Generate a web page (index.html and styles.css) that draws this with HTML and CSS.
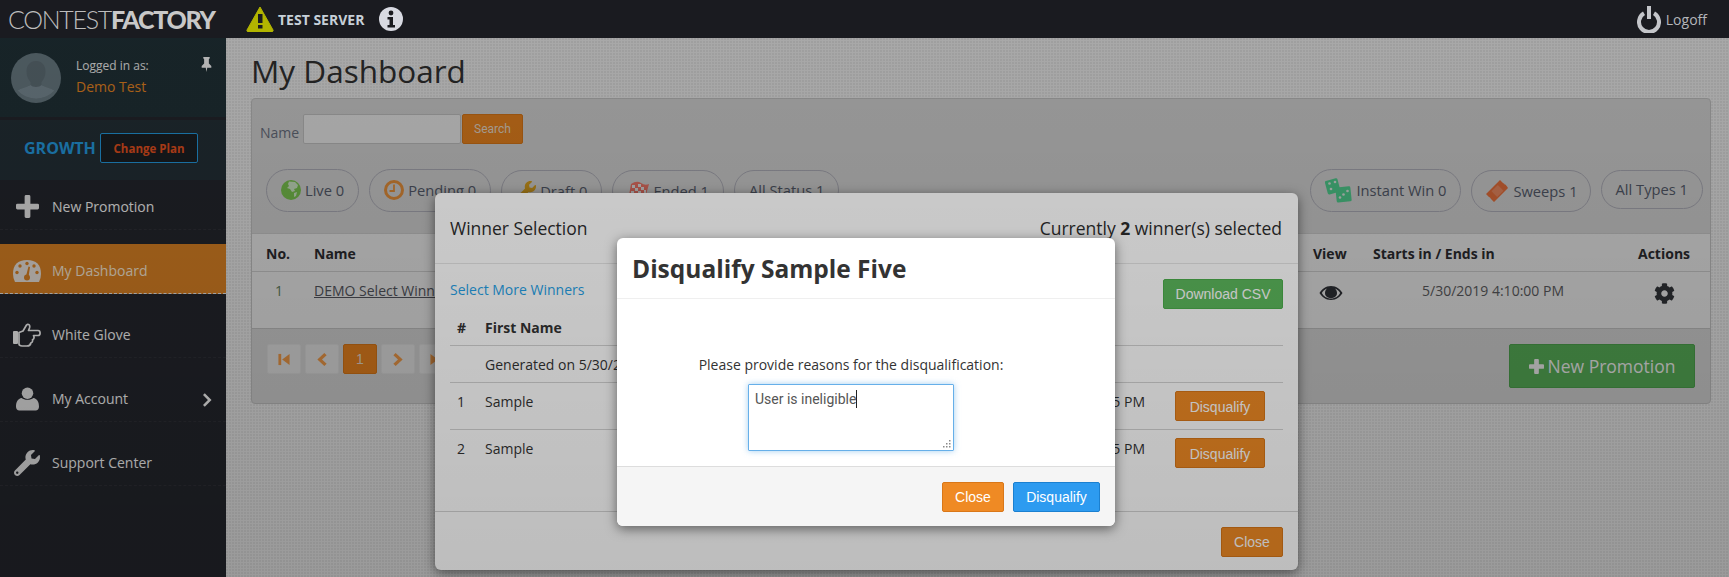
FILE: index.html
```html
<!DOCTYPE html>
<html lang="en">
<head>
<meta charset="utf-8">
<title>Contest Factory - My Dashboard</title>
<link rel="stylesheet" href="styles.css">
</head>
<body>
<div class="app">
  <header class="topbar">
    <div class="logo"><span class="logo-thin">CONTEST</span><span class="logo-bold">FACTORY</span></div>
    <svg class="ic-warn" viewBox="0 0 28 26"><path d="M14 1 L27 24 Q27.500 25.500 26 25.500 H2 Q.5 25.500 1 24 Z" fill="#b2b400" stroke="#b2b400" stroke-linejoin="round"/><rect x="12" y="8" width="4.500" height="9" fill="#1a1b20"/><rect x="12" y="19" width="4.500" height="3.500" fill="#1a1b20"/></svg>
    <span class="test-server">TEST SERVER</span>
    <svg class="ic-info" viewBox="0 0 24 24"><circle cx="12" cy="12" r="12" fill="#d8dae2"/><circle cx="12" cy="6" r="2.400" fill="#1a1b20"/><path d="M8.500 10h5.500v8h2v2.500H8.500V18h2v-5.500h-2z" fill="#1a1b20"/></svg>
    <div class="logoff">
      <svg class="ic-power" viewBox="0 0 24 27"><path d="M7 7.300 A10 10 0 1 0 17 7.300" fill="none" stroke="#c4c6ca" stroke-width="4"/><rect x="10" y="0" width="4" height="13" fill="#c4c6ca"/></svg>
      <span>Logoff</span>
    </div>
  </header>

  <div class="layout">
    <aside class="sidebar">
      <section class="user-panel">
        <svg class="avatar" viewBox="0 0 50 50"><circle cx="25" cy="25" r="25" fill="#6b7d85"/><path d="M25 8c6 0 9.500 4.500 9.500 10.500 0 4-1.500 8-4 10.500v3c3 2 9 3 13 5.500A25 25 0 0 1 6.500 37.500c4-2.500 10-3.500 13-5.500v-3c-2.500-2.500-4-6.500-4-10.500C15.500 12.500 19 8 25 8z" fill="#617079"/><path d="M6.500 37.500c4-2.500 10-3.500 13-5.500 2 2.500 9 2.500 11 0 3 2 9 3 13 5.500A25 25 0 0 1 6.500 37.500z" fill="#7c8e97"/></svg>
        <div class="user-text">
          <div class="logged">Logged in as:</div>
          <div class="user-name">Demo Test</div>
        </div>
        <svg class="ic-pin" viewBox="0 0 10 14"><path d="M2 0h6v1.200L7.200 2v4L9.500 8.500V10H5.700L5 14 4.300 10H.5V8.500L2.800 6V2L2 1.200z" fill="#fff"/></svg>
      </section>
      <section class="plan-panel">
        <span class="plan-name">GROWTH</span>
        <span class="plan-btn">Change Plan</span>
      </section>
      <nav class="nav">
        <a class="nav-item"><span class="nav-ic"><svg class="ic-plus" viewBox="0 0 24 24"><path d="M9 1.500Q9 0 10.500 0h3Q15 0 15 1.500V9h7.500Q24 9 24 10.500v3q0 1.500-1.500 1.500H15v7.500q0 1.500-1.500 1.500h-3Q9 24 9 22.500V15H1.500Q0 15 0 13.500v-3Q0 9 1.500 9H9z"/></svg></span>New Promotion</a>
        <a class="nav-item active"><span class="nav-ic"><svg class="ic-gauge" viewBox="0 0 28 22"><path d="M2 22Q0 18 0 14 0 0 14 0t14 14q0 4-2 8z" fill="#efe9e2"/><g fill="#df8525"><circle cx="14" cy="3.500" r="1.700"/><circle cx="7" cy="6" r="1.700"/><circle cx="21" cy="6" r="1.700"/><circle cx="4" cy="12.500" r="1.700"/><circle cx="24" cy="12.500" r="1.700"/><circle cx="14" cy="17.500" r="3"/><path d="M13 16 L15.500 6.500 L17 7 L15.500 17z"/></g></svg></span>My Dashboard</a>
        <a class="nav-item"><span class="nav-ic"><svg class="ic-hand" viewBox="0 0 28 24"><rect x="0" y="8" width="5" height="13" rx="1" fill="#fff"/><path d="M6 9.500 L10 8 L13.500 2 C15 .5 17.500 1.500 16.500 5 L15.500 7.500 H25 C27.800 7.500 27.800 12.500 25 12.500 H20.500 C21.500 14.500 21 16 19.500 16.800 C20 18.500 19 19.500 17.800 20 C17.500 22 16 23 14 23 H9 C7 23 6 22 6 21 Z" fill="none" stroke="#fff" stroke-width="1.700" stroke-linejoin="round"/></svg></span>White Glove</a>
        <a class="nav-item"><span class="nav-ic"><svg class="ic-user" viewBox="0 0 24 24"><circle cx="12" cy="6" r="6"/><path d="M6 11c2 2.500 10 2.500 12 0 4 .5 6 4 6 9 0 2.500-1.500 4-3.500 4h-17C1.500 24 0 22.500 0 20c0-5 2-8.500 6-9z"/></svg></span>My Account<svg class="ic-chev" viewBox="0 0 10 15"><path d="M2 0 L9.500 7.500 L2 15 L0 13 L5.500 7.500 L0 2z"/></svg></a>
        <a class="nav-item"><span class="nav-ic"><svg class="ic-wrench" viewBox="0 0 512 512"><path d="M507.730 109.100c-2.240-9.030-13.540-12.090-20.120-5.510l-74.360 74.360-67.880-11.310-11.310-67.880 74.360-74.360c6.620-6.620 3.430-17.900-5.660-20.160-47.380-11.740-99.550.91-136.580 37.930-39.640 39.640-50.550 97.100-34.050 147.200L18.740 402.760c-24.990 24.990-24.990 65.510 0 90.500 24.990 24.990 65.510 24.990 90.500 0l213.210-213.210c50.120 16.710 107.470 5.680 147.370-34.220 37.070-37.070 49.700-89.320 37.910-136.730zM64 472c-13.250 0-24-10.750-24-24 0-13.260 10.750-24 24-24s24 10.740 24 24c0 13.250-10.750 24-24 24z"/></svg></span>Support Center</a>
      </nav>
    </aside>

    <main class="content">
      <h1 class="page-title">My Dashboard</h1>
      <section class="panel">
        <form class="search-row">
          <span class="search-label">Name</span>
          <span class="search-input"></span>
          <span class="btn btn-search">Search</span>
        </form>
        <div class="pill-row">
          <div class="pill-group">
            <span class="pill"><svg class="pill-ic" viewBox="0 0 20 20"><circle cx="10" cy="10" r="10" fill="#7cc650"/><path d="M8 1.500l6 .5 3 3-1 3-3 1 1 2-3 1-2-3-3-1 2-2-1-2zM13 13l3-1-1 4-2 1z" fill="#cfe8c6"/></svg>Live 0</span>
            <span class="pill"><svg class="pill-ic" viewBox="0 0 20 20"><circle cx="10" cy="10" r="8.500" fill="none" stroke="#e8923c" stroke-width="3"/><path d="M10 4.500V11H5.500" fill="none" stroke="#e8923c" stroke-width="1.800"/></svg>Pending 0</span>
            <span class="pill pill-low"><svg class="pill-ic" viewBox="0 0 512 512"><path fill="#d8a020" d="M507.730 109.100c-2.240-9.030-13.540-12.090-20.120-5.510l-74.360 74.360-67.880-11.310-11.310-67.880 74.360-74.360c6.620-6.620 3.430-17.900-5.660-20.160-47.380-11.740-99.550.91-136.580 37.930-39.640 39.640-50.550 97.100-34.050 147.200L18.740 402.760c-24.990 24.990-24.990 65.510 0 90.500 24.990 24.990 65.510 24.990 90.500 0l213.210-213.210c50.120 16.710 107.470 5.680 147.370-34.220 37.070-37.070 49.700-89.320 37.910-136.730z"/></svg>Draft 0</span>
            <span class="pill pill-low"><svg class="pill-ic ic-flag" viewBox="0 0 22 20"><path d="M1 20 L4 3 Q10 -1 14 2 T22 3 L19 14 Q14 16 10 13 T2 16" fill="#f0776a"/><path d="M5 4h3v3H5zM11 3h3v3h-3zM8 7h3v3H8zM14 6h3v3h-3zM4 10h3v3H4zM11 10h3v3h-3zM17 9h2v3h-2z" fill="#e8e8e8"/></svg>Ended 1</span>
            <span class="pill pill-low pill-plain">All Status 1</span>
          </div>
          <div class="pill-group">
            <span class="pill"><svg class="pill-ic ic-dice" viewBox="0 0 27 25"><rect x="1" y="1.500" width="13" height="14" rx="1.500" fill="#52d090" transform="rotate(-15 7 8)"/><rect x="11" y="9" width="15" height="15" rx="1.500" fill="#52d090" transform="rotate(-6 18 16)"/><g fill="#dfe8e2"><circle cx="4.500" cy="5.500" r="1.300"/><circle cx="10" cy="4" r="1.300"/><circle cx="6" cy="11" r="1.300"/><circle cx="15" cy="19.500" r="1.300"/><circle cx="18.500" cy="16.500" r="1.300"/><circle cx="22.500" cy="13" r="1.300"/></g></svg>Instant Win 0</span>
            <span class="pill pill-low pill-sweeps"><svg class="pill-ic ic-ticket" viewBox="0 0 24 24"><path d="M15 1 L18 4 Q20 5 20 6 Q20 4 23 9 L9 23 L6 20 Q5 18 4 18 L1 15 Z" fill="#e8703c"/><rect x="8" y="8" width="9" height="8" transform="rotate(-45 12.500 12)" fill="#f0a080" opacity=".55"/></svg>Sweeps 1</span>
            <span class="pill pill-low pill-plain pill-short">All Types 1</span>
          </div>
        </div>
        <div class="table-wrap">
          <div class="grid-row grid-head">
            <span>No.</span><span>Name</span><span>View</span><span>Starts in / Ends in</span><span>Actions</span>
          </div>
          <div class="grid-row grid-body">
            <span class="cell-no">1</span>
            <a class="cell-name">DEMO Select Winners Sample</a>
            <svg class="ic-eye" viewBox="0 0 24 16"><path d="M12 1C6.500 1 2.500 4.500 .5 8c2 3.500 6 7 11.500 7s9.500-3.500 11.500-7C21.500 4.500 17.500 1 12 1zm0 12.500C7.500 13.500 4.500 11 2.800 8 4 6 6 4.200 8 3.500 6.800 4.700 6 6.200 6 8c0 3.300 2.700 5 6 5s6-1.700 6-5c0-1.800-.8-3.300-2-4.500 2 .7 4 2.500 5.200 4.500-1.700 3-4.700 5.500-9.200 5.500z" fill="#2e3036"/></svg>
            <span class="cell-date">5/30/2019 4:10:00 PM</span>
            <svg class="ic-gear" viewBox="0 0 512 512"><path fill="#33353a" d="M487.400 315.700l-42.600-24.600c4.300-23.200 4.300-47 0-70.200l42.600-24.600c4.900-2.800 7.100-8.600 5.500-14-11.100-35.600-30-67.800-54.700-94.600-3.800-4.100-10-5.100-14.800-2.300L380.800 110c-17.900-15.400-38.500-27.300-60.800-35.100V25.800c0-5.600-3.900-10.500-9.400-11.700-36.700-8.200-74.300-7.800-109.200 0-5.500 1.200-9.400 6.100-9.400 11.700V75c-22.200 7.900-42.800 19.800-60.800 35.100L88.700 85.500c-4.900-2.800-11-1.900-14.800 2.300-24.700 26.700-43.600 58.900-54.700 94.600-1.700 5.400.6 11.200 5.500 14L67.300 221c-4.300 23.200-4.300 47 0 70.200l-42.600 24.600c-4.900 2.800-7.100 8.600-5.500 14 11.100 35.600 30 67.800 54.700 94.600 3.800 4.100 10 5.100 14.800 2.300l42.600-24.600c17.900 15.400 38.500 27.300 60.800 35.100v49.200c0 5.600 3.900 10.500 9.400 11.700 36.700 8.200 74.300 7.800 109.200 0 5.500-1.200 9.400-6.100 9.400-11.700v-49.200c22.200-7.900 42.800-19.800 60.800-35.100l42.600 24.600c4.900 2.800 11 1.900 14.800-2.300 24.700-26.700 43.600-58.900 54.700-94.600 1.500-5.500-.7-11.300-5.600-14.100zM256 336c-44.100 0-80-35.900-80-80s35.900-80 80-80 80 35.900 80 80-35.900 80-80 80z"/></svg>
          </div>
        </div>
        <div class="pager-row">
          <div class="pager">
            <span class="page-btn"><svg viewBox="0 0 12 14"><rect x="0" y="1" width="3" height="12"/><path d="M12 1v12L4 7z"/></svg></span>
            <span class="page-btn"><svg viewBox="0 0 10 14"><path d="M7.500 0L0 7l7.500 7L10 11.500 5 7l5-4.500z"/></svg></span>
            <span class="page-btn page-current">1</span>
            <span class="page-btn"><svg viewBox="0 0 10 14"><path d="M2.500 0L10 7l-7.500 7L0 11.500 5 7 0 2.500z"/></svg></span>
            <span class="page-btn"><svg viewBox="0 0 12 14"><rect x="9" y="1" width="3" height="12"/><path d="M0 1v12l8-6z"/></svg></span>
          </div>
          <span class="btn-new"><svg viewBox="0 0 16 16"><path d="M5.500 1q0-1 1-1h3q1 0 1 1v4.500H15q1 0 1 1v3q0 1-1 1h-4.500V15q0 1-1 1h-3q-1 0-1-1v-4.500H1q-1 0-1-1v-3q0-1 1-1h4.500z"/></svg>New Promotion</span>
        </div>
      </section>
    </main>
  </div>

  <div class="backdrop backdrop-first"></div>

  <section class="modal modal-winner">
    <div class="winner-head">
      <span>Winner Selection</span>
      <span>Currently <b>2</b> winner(s) selected</span>
    </div>
    <div class="winner-body">
      <div class="winner-actions">
        <a class="link-more">Select More Winners</a>
        <span class="btn btn-green">Download CSV</span>
      </div>
      <div class="w-row w-head"><span>#</span><span>First Name</span></div>
      <div class="w-row w-gen"><span></span><span>Generated on 5/30/2019</span></div>
      <div class="w-row w-item"><span>1</span><span>Sample</span><span class="w-date">5/30/2019 4:15:25 PM</span><span class="btn btn-orange btn-dq">Disqualify</span></div>
      <div class="w-row w-item w-last"><span>2</span><span>Sample</span><span class="w-date">5/30/2019 4:15:25 PM</span><span class="btn btn-orange btn-dq">Disqualify</span></div>
    </div>
    <div class="winner-foot"><span class="btn btn-orange btn-close">Close</span></div>
  </section>

  <div class="backdrop backdrop-second"></div>

  <section class="modal modal-dq">
    <h2 class="dq-head">Disqualify Sample Five</h2>
    <div class="dq-body">
      <p class="dq-text">Please provide reasons for the disqualification:</p>
      <div class="dq-area"><span class="dq-value">User is ineligible</span><svg class="dq-grip" viewBox="0 0 9 9"><g fill="#8a8a8a"><rect x="7" y="1" width="1.500" height="1.500"/><rect x="4" y="4" width="1.500" height="1.500"/><rect x="7" y="4" width="1.500" height="1.500"/><rect x="1" y="7" width="1.500" height="1.500"/><rect x="4" y="7" width="1.500" height="1.500"/><rect x="7" y="7" width="1.500" height="1.500"/></g></svg></div>
    </div>
    <div class="dq-foot">
      <span class="btn btn-orange btn-close">Close</span>
      <span class="btn btn-blue">Disqualify</span>
    </div>
  </section>
</div>
</body>
</html>
```

FILE: styles.css
```css
* { box-sizing: border-box; }
html, body { margin: 0; padding: 0; }
body { font-family: "Open Sans", "Liberation Sans", sans-serif; font-size: 14px; color: #444; background: #25272e; }
.app { position: relative; width: 1729px; height: 577px; overflow: hidden; }

/* top bar */
.topbar { position: relative; z-index: 5; height: 38px; background: #1a1b20; display: flex; align-items: center; color: #c0c2c6; }
.logo { margin-left: 8px; width: 210px; font-family: Lato, sans-serif; font-size: 25px; letter-spacing: -1.300px; color: #bdbdbd; white-space: nowrap; line-height: 32px; }
.logo-thin { font-weight: 300; }
.logo-bold { font-weight: 900; color: #c8c8c8; }
.ic-warn { width: 28px; height: 26px; margin-left: 28px; }
.test-server { margin-left: 4px; font-weight: 700; font-size: 14px; color: #c6d0d8; white-space: nowrap; }
.ic-info { width: 24px; height: 24px; margin-left: 15px; }
.logoff { margin-left: auto; margin-right: 22px; display: flex; align-items: center; gap: 5px; font-size: 14px; color: #b4b6ba; }
.ic-power { width: 24px; height: 27px; }

/* layout */
.layout { display: flex; height: 539px; }
.sidebar { width: 226px; flex: none; background: #25272e; }
.user-panel { height: 79px; background: #223339; display: flex; padding: 15px 0 0 11px; position: relative; }
.avatar { width: 50px; height: 50px; flex: none; }
.user-text { margin-left: 15px; padding-top: 2px; }
.logged { font-size: 12px; line-height: 21px; color: #f2f2f2; }
.user-name { font-size: 14px; line-height: 21px; color: #ee8a22; }
.ic-pin { position: absolute; left: 201px; top: 19px; width: 11px; height: 15px; }
.plan-panel { margin-top: 3px; height: 60px; background: #253238; display: flex; align-items: center; padding: 0 0 4px 24px; }
.plan-name { font-size: 16px; font-weight: 700; color: #259fe6; width: 76px; }
.plan-btn { width: 98px; height: 30px; border: 1px solid #259fe6; border-radius: 2px; background: #1c2024; color: #ee5420; font-size: 11.500px; font-weight: 700; display: flex; align-items: center; justify-content: center; padding-top: 1px; }

.nav { display: flex; flex-direction: column; gap: 14px; }
.nav-item { height: 50px; padding-top: 4px; display: flex; align-items: center; color: #fff; font-size: 14px; border-bottom: 1px dashed rgba(255,255,255,.05); position: relative; }
.nav-item.active { background: #df8525; color: #fff0dc; border-bottom-color: #eee; }
.nav-ic { width: 28px; height: 26px; margin: 0 11px 0 13px; display: flex; align-items: center; justify-content: center; fill: #eee; }
.ic-plus { width: 23px; height: 23px; }
.ic-gauge { width: 28px; height: 22px; }
.ic-hand { width: 28px; height: 24px; }
.ic-user { width: 23px; height: 24px; }
.ic-wrench { width: 26px; height: 26px; }
.ic-chev { width: 9px; height: 14px; fill: #fff; position: absolute; left: 203px; top: 21px; }

/* main */
.content { flex: 1; min-width: 0; padding: 11px 18px 0 25px; background: radial-gradient(circle at 1px 1px, rgba(0,0,0,.05) .8px, transparent 1px) 0 0 / 3px 3px, #eeeeee; }
.page-title { margin: 0 0 5px; font-size: 31.500px; font-weight: 400; line-height: 44px; color: #323232; }
.panel { height: 306px; background: #d5d5d5; border: 1px solid #c2c2c2; border-radius: 4px; }
.search-row { margin: 0; padding: 15px 0 0 8px; display: flex; align-items: stretch; height: 45px; }
.search-label { width: 43px; padding-top: 9px; color: #6a7080; line-height: 20px; }
.search-input { width: 158px; background: #ececec; border: 1px solid #c2c2c2; border-radius: 2px; }
.btn { display: inline-flex; align-items: center; justify-content: center; font-family: "Liberation Sans", Arial, sans-serif; border-radius: 2px; white-space: nowrap; }
.btn-search { width: 61px; margin-left: 1px; background: #ea841f; border: 1px solid #d97718; color: #e8dccc; font-family: Roboto, sans-serif; font-size: 12px; }

.pill-row { display: flex; justify-content: space-between; padding: 25px 7px 0 14px; }
.pill-group { display: flex; align-items: flex-start; gap: 10px; }
.pill { height: 43px; padding: 0 14px 1px; display: inline-flex; align-items: center; gap: 4px; border: 1px solid #aeaeb8; border-radius: 22px; color: #565c6c; font-size: 14.700px; white-space: nowrap; }
.pill-low { margin-top: 1px; height: 42px; }
.pill-plain { height: 40px; }
.pill-short { height: 39px; }
.pill-sweeps { padding: 0 12px 1px 13px; }
.pill-ic { width: 20px; height: 20px; flex: none; }
.ic-flag { width: 22px; }
.ic-dice { width: 27px; height: 25px; }
.ic-ticket { width: 24px; height: 24px; }

.table-wrap { margin-top: 21px; background: #ededed; border-top: 1px solid #ccc; border-bottom: 1px solid #c2c2c2; }
.grid-row { display: grid; grid-template-columns: 48px 999px 60px 265px 1fr; padding-left: 14px; align-items: center; }
.grid-head { height: 38px; font-weight: 700; color: #2c2c30; border-bottom: 1px solid #ccc; padding-top: 1px; }
.grid-body { height: 56px; align-items: start; padding-top: 9px; color: #5c5c60; }
.cell-no { padding-left: 9px; color: #5f8060; line-height: 20px; }
.cell-name { color: #54565e; text-decoration: underline; line-height: 20px; }
.ic-eye { width: 24px; height: 16px; margin: 4px 0 0 6px; }
.cell-date { padding-left: 49px; line-height: 20px; }
.ic-gear { width: 21px; height: 21px; margin: 2px 0 0 16px; }

.pager-row { display: flex; justify-content: space-between; padding: 15px 15px 0 15px; }
.pager { display: flex; gap: 4px; }
.page-btn { width: 34px; height: 30px; background: #e4e4e4; border: 1px solid #dcdcdc; border-radius: 2px; display: flex; align-items: center; justify-content: center; fill: #ef9a48; font-family: "Liberation Sans", sans-serif; }
.page-btn svg { height: 13px; width: 12px; }
.page-current { background: #ea841f; border-color: #d97718; color: #e8dccc; }
.btn-new { width: 186px; height: 44px; background: #58b058; border: 1px solid #4ea44e; border-radius: 2px; color: #f4f4f4; font-size: 17.500px; display: flex; align-items: center; justify-content: center; gap: 4px; }
.btn-new svg { width: 15px; height: 15px; fill: #f2f2f2; }

/* overlays */
.backdrop { position: absolute; inset: 0; }
.backdrop-first { z-index: 1; background: rgba(0,0,0,.125); }
.backdrop-second { z-index: 3; background: linear-gradient(rgba(0,0,0,.19), rgba(0,0,0,.26)); }
.modal { position: absolute; background: #fff; border-radius: 6px; box-shadow: 0 3px 12px rgba(0,0,0,.5); color: #333; }

.modal-winner { z-index: 2; left: 435px; top: 193px; width: 863px; height: 377px; display: flex; flex-direction: column; }
.winner-head { height: 71px; padding: 0 16px 0 15px; display: flex; justify-content: space-between; align-items: center; font-size: 17.500px; border-bottom: 1px solid #e6e6e6; color: #2c2c2c; }
.winner-body { height: 247px; padding: 15px 15px 0; }
.winner-actions { display: flex; justify-content: space-between; height: 30px; }
.link-more { color: #259fe6; line-height: 22px; }
.btn-green { width: 120px; height: 30px; background: #5cb85c; border: 1px solid #4cae4c; color: #fff; font-size: 14px; }
.w-row { display: grid; grid-template-columns: 35px 480px 180px 138px; align-items: center; border-bottom: 1px solid #d4d4d4; }
.w-row > span:first-child { padding-left: 7px; }
.w-head { height: 37px; font-weight: 700; padding-top: 1px; }
.w-gen { height: 37px; padding-top: 1px; white-space: nowrap; }
.w-item { height: 47px; align-items: start; padding-top: 8px; }
.w-item > span { line-height: 22px; }
.w-item .btn-dq { line-height: 1; padding-top: 1px; }
.w-last { border-bottom: 0; }
.w-date { text-align: right; white-space: nowrap; }
.btn-orange { background: #ef8a24; border: 1px solid #d97718; color: #fff; font-size: 14px; }
.btn-dq { width: 90px; height: 30px; justify-self: start; margin-left: 30px; }
.winner-foot { flex: 1; border-top: 1px solid #d4d4d4; padding: 15px 15px 0; display: flex; justify-content: flex-end; }
.btn-close { width: 62px; height: 30px; }

.modal-dq { z-index: 4; left: 617px; top: 238px; width: 498px; height: 288px; display: flex; flex-direction: column; }
.dq-head { margin: 0; height: 61px; padding: 0 15px; font-size: 24.500px; font-weight: 700; line-height: 61px; color: #333; border-bottom: 1px solid #efefef; }
.dq-body { flex: 1; display: flex; flex-direction: column; align-items: center; padding: 56px 30px 0 0; }
.dq-text { margin: 0 0 9px; line-height: 20px; color: #333; }
.dq-area { position: relative; width: 206px; height: 67px; border: 1px solid #66afe9; border-radius: 1px; box-shadow: 0 0 6px rgba(102,175,233,.6); padding: 4px 6px; }
.dq-value { font-family: Roboto, "Liberation Sans", sans-serif; font-size: 14px; color: #555; line-height: 18px; border-right: 1px solid #222; display: inline-block; }
.dq-grip { position: absolute; right: 2px; bottom: 2px; width: 9px; height: 9px; }
.dq-foot { height: 60px; padding: 15px 15px 0; background: #f5f5f5; border-top: 1px solid #ddd; border-radius: 0 0 6px 6px; display: flex; justify-content: flex-end; gap: 9px; }
.btn-blue { width: 87px; height: 30px; background: #2d9bf0; border: 1px solid #1b80d0; color: #fff; font-size: 14px; }
```
